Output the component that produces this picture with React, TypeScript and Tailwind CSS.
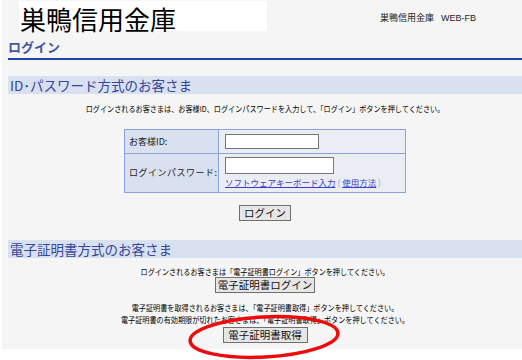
import React from 'react';

const jp = "font-['Noto_Sans_CJK_JP','Liberation_Sans',sans-serif]";

function GreyButton({ label, w }: { label: string; w: string }) {
  return (
    <div className="flex justify-center">
      <button
        type="button"
        className={`${w} h-[16px] flex items-center justify-center bg-[#e6e6e6] border border-[#6f6f6f] text-[10.5px] leading-none text-[#111]`}
      >
        {label}
      </button>
    </div>
  );
}

function Note({ children }: { children: React.ReactNode }) {
  return (
    <p className="h-[12px] leading-[12px] text-center text-[8.2px] text-black whitespace-nowrap scale-x-[0.87]">
      {children}
    </p>
  );
}

export default function App() {
  return (
    <div className={`w-[522px] h-[360px] bg-white overflow-hidden ${jp}`}>
      <div className="relative h-[349px] bg-[#f5f5f5] ml-[2px] pl-[6px]">
        {/* header */}
        <div className="flex items-start h-[34px]">
          <div className="ml-[11px] mt-[1px] w-[248px] h-[30px] bg-white pl-[1px] flex items-center">
            <span className="text-[26px] leading-none text-black translate-y-[3px]">巣鴨信用金庫</span>
          </div>
          <div className="ml-auto mr-[46px] mt-[12px] text-[9px] leading-[12px] text-[#222] whitespace-nowrap">
            巣鴨信用金庫<span className="ml-[7px] font-['Liberation_Sans',sans-serif] text-[9px]">WEB-FB</span>
          </div>
        </div>

        <div className="h-[26px] flex items-end pb-[3px] border-b-2 border-[#2443a8]">
          <h1 className="text-[13px] leading-[16px] font-bold text-[#4257a3]">ログイン</h1>
        </div>

        {/* ID / password */}
        <div className="mt-[16px] h-[18px] bg-[#d9e0ef] pl-[2px] text-[13.5px] leading-[18px] text-[#34479a] whitespace-nowrap">
          ID･パスワード方式のお客さま
        </div>
        <div className="mt-[8px]">
          <Note>ログインされるお客さまは、お客様ID、ログインパスワードを入力して、「ログイン」ボタンを押してください。</Note>
        </div>

        <div className="mt-[15px] flex justify-center">
          <div className="w-[282px] border border-[#8aa3dc] text-[9px] text-[#222]">
            <div className="flex h-[23px]">
              <div className="w-[94px] bg-[#d9e0ef] border-r border-[#8aa3dc] flex items-center pl-[4px]">
                お客様ID:
              </div>
              <div className="flex-1 bg-[#eaeef4] flex items-center pl-[6px]">
                <input className="w-[94px] h-[15px] bg-white border border-[#767676]" />
              </div>
            </div>
            <div className="flex h-[39px] border-t border-[#8aa3dc]">
              <div className="w-[94px] bg-[#d9e0ef] border-r border-[#8aa3dc] flex items-center pl-[4px] tracking-[0.5px]">
                ログインパスワード:
              </div>
              <div className="flex-1 bg-[#eaeef4] pl-[6px] pt-[3px]">
                <input className="block w-[109px] h-[17px] bg-white border border-[#767676]" />
                <div className="mt-[2px] text-[8.5px] leading-[12px] whitespace-nowrap">
                  <a className="text-[#3c3cc4] underline">ソフトウェアキーボード入力</a>
                  <span className="text-[#8aa3dc]"> ( </span>
                  <a className="text-[#3c3cc4] underline">使用方法</a>
                  <span className="text-[#8aa3dc]"> )</span>
                </div>
              </div>
            </div>
          </div>
        </div>

        <div className="mt-[12px]">
          <GreyButton label="ログイン" w="w-[52px]" />
        </div>

        {/* certificate */}
        <div className="mt-[19px] h-[18px] bg-[#d9e0ef] pl-[2px] text-[13.5px] leading-[18px] text-[#34479a] whitespace-nowrap">
          電子証明書方式のお客さま
        </div>
        <div className="mt-[7px]">
          <Note>ログインされるお客さまは「電子証明書ログイン」ボタンを押してください。</Note>
        </div>
        <GreyButton label="電子証明書ログイン" w="w-[100px]" />

        <div className="mt-[8px]">
          <Note>電子証明書を取得されるお客さまは、「電子証明書取得」ボタンを押してください。</Note>
          <Note>電子証明書の有効期限が切れたお客さまは、「電子証明書取得」ボタンを押してください。</Note>
        </div>
        <div className="mt-[2px]">
          <GreyButton label="電子証明書取得" w="w-[85px]" />
        </div>

        <svg
          className="absolute left-[180px] top-[310px] overflow-visible"
          width="170"
          height="56"
          viewBox="0 0 170 56"
        >
          <ellipse
            cx="82"
            cy="27"
            rx="74"
            ry="20"
            fill="none"
            stroke="#ee0a0a"
            strokeWidth="3.5"
            transform="rotate(-3 82 27)"
          />
        </svg>
      </div>
    </div>
  );
}
